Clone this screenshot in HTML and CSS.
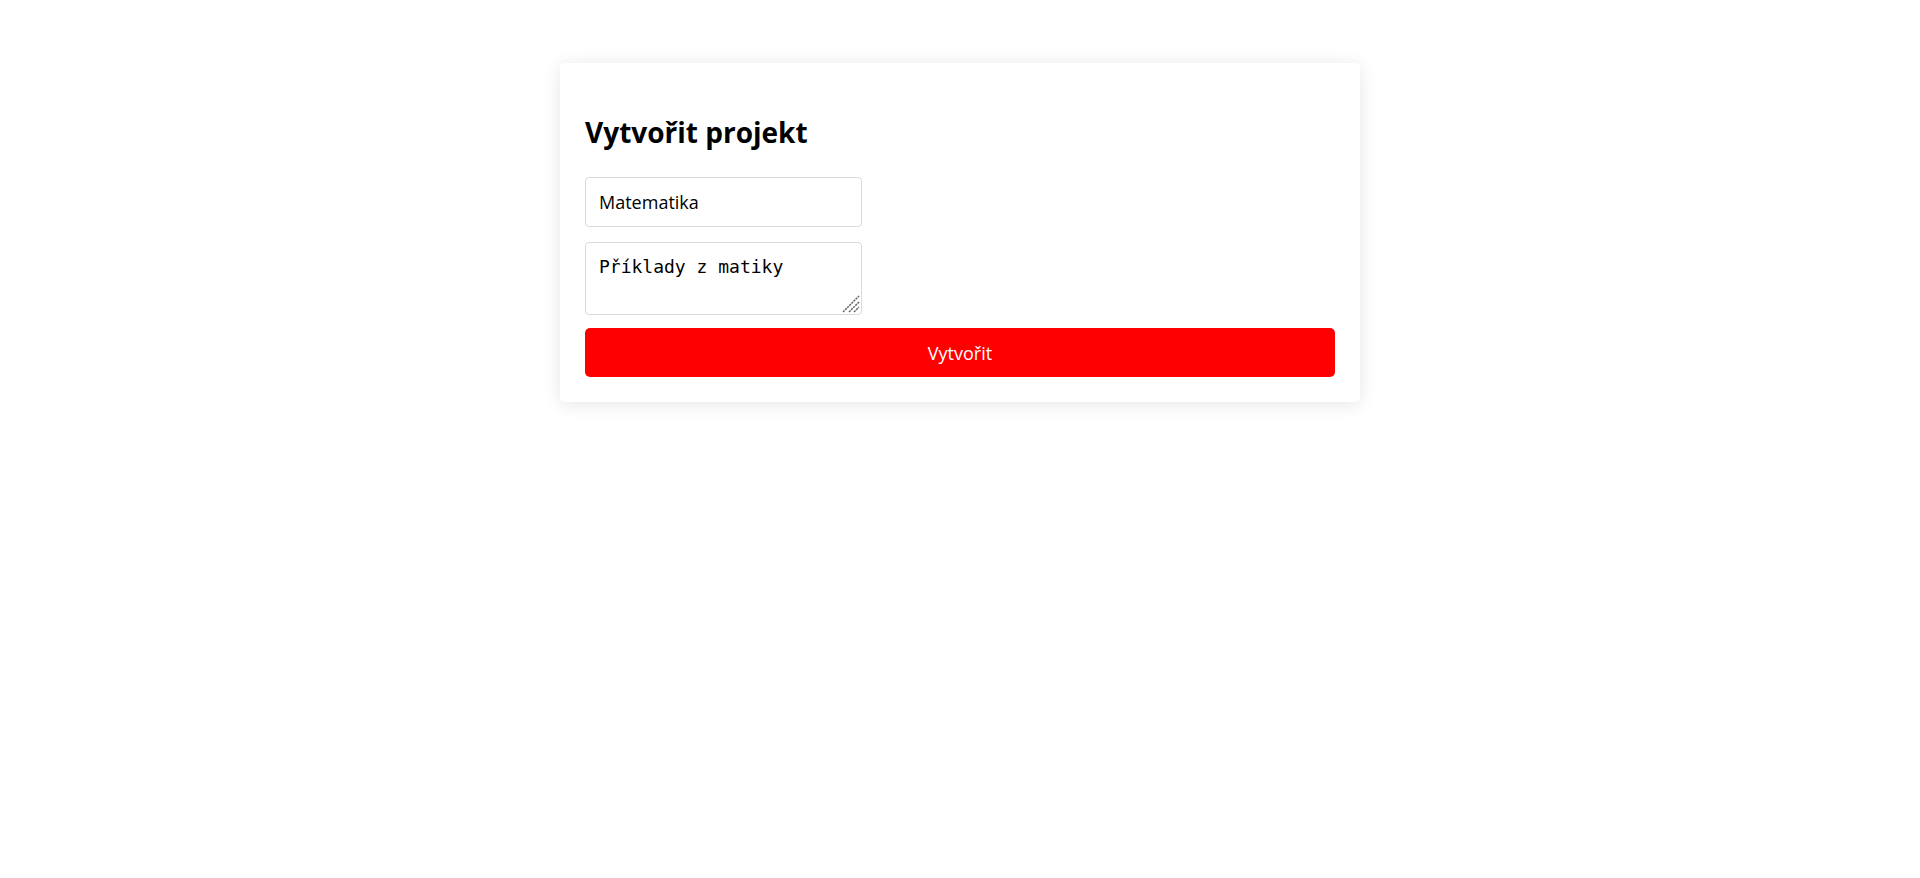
FILE: index.html
```html
<!DOCTYPE html>
<html lang="cs">
<head>
<meta charset="utf-8">
<title>Vytvořit projekt</title>
<link rel="stylesheet" href="styles.css">
</head>
<body>
<main class="page">
  <form class="card">
    <h1 class="title">Vytvořit projekt</h1>
    <input class="field" type="text" value="Matematika">
    <div class="area-wrap">
      <textarea class="area">Příklady z matiky</textarea>
      <svg class="grip" width="18" height="18" viewBox="0 0 18 18" aria-hidden="true">
        <path d="M1 17 L17 1 M7 17 L17 7 M12 17 L17 12" stroke="#666" stroke-width="1.5" stroke-dasharray="2.2 0.8" fill="none"/>
      </svg>
    </div>
    <button class="submit" type="button">Vytvořit</button>
  </form>
</main>
</body>
</html>
```
FILE: styles.css
```css
html, body {
  margin: 0;
  padding: 0;
  background: #ffffff;
}

.page {
  box-sizing: border-box;
  min-height: 100vh;
  padding-top: 63px;
  display: flex;
  justify-content: center;
  align-items: flex-start;
  font-family: "Open Sans", "Noto Sans", sans-serif;
}

.card {
  width: 800px;
  box-sizing: border-box;
  padding: 25px;
  background: #fff;
  border-radius: 5px;
  box-shadow: 0 2px 18px rgba(0, 0, 0, 0.1);
  display: flex;
  flex-direction: column;
  align-items: flex-start;
}

.title {
  margin: 24px 0 25px;
  font-size: 28px;
  line-height: 40px;
  font-weight: 700;
  color: #000;
}

.field {
  width: 277px;
  height: 50px;
  box-sizing: border-box;
  margin: 0;
  padding: 0 13px;
  border: 1px solid #dadada;
  border-radius: 4px;
  font-family: "Open Sans", "Noto Sans", sans-serif;
  font-size: 18px;
  color: #000;
  outline: none;
}

.area-wrap {
  position: relative;
  margin-top: 15px;
  width: 277px;
  height: 73px;
}

.area {
  display: block;
  width: 100%;
  height: 100%;
  box-sizing: border-box;
  margin: 0;
  padding: 12px 13px;
  border: 1px solid #dadada;
  border-radius: 4px;
  font-family: "DejaVu Sans Mono", "Liberation Mono", monospace;
  font-size: 18px;
  line-height: 23px;
  color: #000;
  outline: none;
  resize: none;
}

.grip {
  position: absolute;
  right: 2px;
  bottom: 2px;
  pointer-events: none;
}

.submit {
  width: 100%;
  height: 49px;
  margin: 13px 0 0;
  padding: 0;
  border: none;
  border-radius: 5px;
  background: #ff0000;
  color: #fff;
  font-family: "Open Sans", "Noto Sans", sans-serif;
  font-size: 18px;
  cursor: pointer;
}
```
